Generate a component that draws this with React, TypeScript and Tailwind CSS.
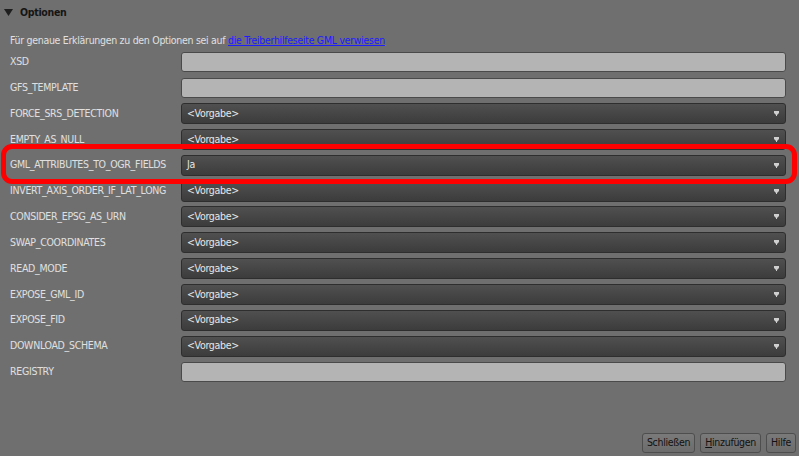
import React from 'react';

const rows: { label: string; kind: 'text' | 'select'; value?: string }[] = [
  { label: 'XSD', kind: 'text' },
  { label: 'GFS_TEMPLATE', kind: 'text' },
  { label: 'FORCE_SRS_DETECTION', kind: 'select', value: '<Vorgabe>' },
  { label: 'EMPTY_AS_NULL', kind: 'select', value: '<Vorgabe>' },
  { label: 'GML_ATTRIBUTES_TO_OGR_FIELDS', kind: 'select', value: 'Ja' },
  { label: 'INVERT_AXIS_ORDER_IF_LAT_LONG', kind: 'select', value: '<Vorgabe>' },
  { label: 'CONSIDER_EPSG_AS_URN', kind: 'select', value: '<Vorgabe>' },
  { label: 'SWAP_COORDINATES', kind: 'select', value: '<Vorgabe>' },
  { label: 'READ_MODE', kind: 'select', value: '<Vorgabe>' },
  { label: 'EXPOSE_GML_ID', kind: 'select', value: '<Vorgabe>' },
  { label: 'EXPOSE_FID', kind: 'select', value: '<Vorgabe>' },
  { label: 'DOWNLOAD_SCHEMA', kind: 'select', value: '<Vorgabe>' },
  { label: 'REGISTRY', kind: 'text' },
];

function Field({ kind, value }: { kind: 'text' | 'select'; value?: string }) {
  if (kind === 'text') {
    return <div className="h-[20px] flex-1 rounded-[3px] border border-[#4a4a4a] bg-[#b4b4b4]" />;
  }
  return (
    <div className="flex h-[21px] flex-1 items-center justify-between rounded-[3px] border border-[#2e2e2e] bg-gradient-to-b from-[#505050] to-[#3c3c3c] pl-[5px] pr-[6px] text-[#e6e6e6]">
      <span>{value}</span>
      <svg width="5" height="5" viewBox="0 0 5 5">
        <path d="M0 0h5v2L3 4v1H2V4L0 2z" fill="#cfcfcf" />
      </svg>
    </div>
  );
}

function Button({ children }: { children: React.ReactNode }) {
  return (
    <div className="flex h-[20px] items-center rounded-[3px] border border-[#4e4e4e] bg-gradient-to-b from-[#7a7a7a] to-[#6c6c6c] px-[4px] text-[#111]">
      {children}
    </div>
  );
}

export default function App() {
  return (
    <div
      className="relative flex h-[456px] w-[799px] flex-col overflow-hidden bg-[#6f6f6f] text-[10.5px] tracking-[-0.3px] text-[#e0e0e0]"
      style={{ fontFamily: 'Tahoma, "DejaVu Sans Condensed", "Liberation Sans", sans-serif' }}
    >
      {/* header */}
      <div className="flex h-[25px] items-center gap-[7px] pl-[4px] font-bold text-[#151515]">
        <svg width="9" height="7" viewBox="0 0 9 7">
          <path d="M0 0h9L4.5 7z" fill="#1e1e1e" />
        </svg>
        <span>Optionen</span>
      </div>

      <div className="pl-[10px] pt-[8px] leading-[14px]">
        Für genaue Erklärungen zu den Optionen sei auf{' '}
        <span className="text-[#1c1cff] underline">die Treiberhilfeseite GML verwiesen</span>
      </div>

      <div className="flex flex-col pt-[2px]">
        {rows.map((r) => (
          <div key={r.label} className="flex h-[25.85px] items-center pr-[13px]">
            <div className="w-[181px] pl-[10px]">{r.label}</div>
            <Field kind={r.kind} value={r.value} />
          </div>
        ))}
      </div>

      <div className="mt-auto flex justify-end gap-[5px] pb-[3px] pr-[3px]">
        <Button>Schließen</Button>
        <Button>
          <span>
            <span className="underline">H</span>inzufügen
          </span>
        </Button>
        <Button>Hilfe</Button>
      </div>

      {/* red highlight */}
      <div className="pointer-events-none absolute left-[1px] top-[144px] h-[40px] w-[796px] rounded-[11px] border-[5px] border-[#ff0000]" />
    </div>
  );
}
